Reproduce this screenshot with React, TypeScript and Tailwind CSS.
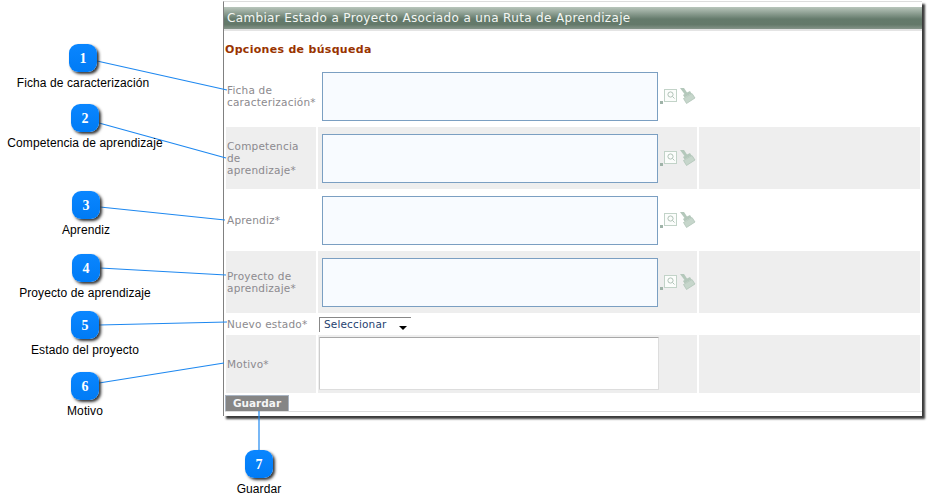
const verdana = "font-['DejaVu_Sans',sans-serif]";

function Icons() {
  return (
    <svg className="ml-[2px] shrink-0" width="36" height="18" viewBox="0 0 36 18">
      <rect x="4.5" y="2.5" width="12" height="12" fill="#fbfdfb" stroke="#c2d3c8" />
      <circle cx="10.5" cy="7.5" r="2.6" fill="none" stroke="#b0c2b7" />
      <path d="M12.5 9.5l2 2" stroke="#b0c2b7" />
      <rect x="0" y="14" width="3" height="3" fill="#9fb3a8" />
      <path d="M20 1h4l3 4.5 3-1.5 1.5 2.5-7 4-1.5-2.5 1.5-1z" fill="#b4c8bb" />
      <path d="M23.5 11.5l8.5-5 3 4.5-8.5 5.5z" fill="#c6d6cb" stroke="#b0c4b7" strokeWidth="0.8" />
    </svg>
  );
}

function Label({ children }: { children: React.ReactNode }) {
  return <span className="text-[10.5px] leading-[12px] tracking-[0.2px] text-[#8c8a8e]">{children}</span>;
}

function LookupRow({ label, gray }: { label: React.ReactNode; gray?: boolean }) {
  const bg = gray ? "bg-[#eeeeee]" : "bg-white";
  return (
    <div className="grid grid-cols-[90px_379px_221px] gap-x-[2px] h-[62px]">
      <div className={`${bg} flex items-center pl-[1px]`}>
        <Label>{label}</Label>
      </div>
      <div className={`${bg} flex items-center pl-[4px]`}>
        <div className="w-[336px] h-[49px] shrink-0 border border-[#7b9fc2] bg-[#f8fbff]" />
        <Icons />
      </div>
      <div className={bg} />
    </div>
  );
}

const badges = [
  { n: 1, x: 69, y: 44 },
  { n: 2, x: 71, y: 104 },
  { n: 3, x: 72, y: 191 },
  { n: 4, x: 72, y: 254 },
  { n: 5, x: 71, y: 311 },
  { n: 6, x: 71, y: 372 },
  { n: 7, x: 245, y: 450 },
];

const captions = [
  { t: "Ficha de caracterización", cx: 83, y: 76 },
  { t: "Competencia de aprendizaje", cx: 85, y: 136 },
  { t: "Aprendiz", cx: 86, y: 223 },
  { t: "Proyecto de aprendizaje", cx: 85, y: 286 },
  { t: "Estado del proyecto", cx: 85, y: 343 },
  { t: "Motivo", cx: 85, y: 404 },
  { t: "Guardar", cx: 259, y: 482 },
];

const lines = [
  [97, 61, 227, 90],
  [99, 123, 226, 158],
  [100, 207, 225, 220],
  [100, 268, 226, 275],
  [99, 325, 227, 322],
  [99, 383, 224, 363],
  [259, 411, 259, 450],
];

export default function App() {
  return (
    <div className="relative w-[935px] h-[499px] bg-white overflow-hidden">
      <div className="pl-[223px] pt-[1px]">
        <div className={`w-[699px] h-[415px] bg-white border-l border-t border-l-[#808080] border-t-[#dddddd] shadow-[3px_3px_2px_#3a3a3a] ${verdana}`}>
          <div className="h-[5px]" />
          <div className="h-[24px] bg-[linear-gradient(#b9c6bc,#647a6b_55%,#64796a_80%,#86958a)] border-b-[2px] border-[#e4e4e4] flex items-center pl-[3px] text-[12px] tracking-[0.35px] text-[#f4f7f4]">
            Cambiar Estado a Proyecto Asociado a una Ruta de Aprendizaje
          </div>
          <div className="h-[34px] pl-[1px] pt-[12px] text-[11px] leading-[14px] font-bold tracking-[0.3px] text-[#993300]">
            Opciones de búsqueda
          </div>
          <div className="pl-[2px] flex flex-col">
            <LookupRow label={<>Ficha de<br />caracterización*</>} />
            <LookupRow gray label={<>Competencia<br />de<br />aprendizaje*</>} />
            <LookupRow label="Aprendiz*" />
            <LookupRow gray label={<>Proyecto de<br />aprendizaje*</>} />
            <div className="grid grid-cols-[90px_602px] gap-x-[2px] h-[22px]">
              <div className="flex items-center pl-[1px]"><Label>Nuevo estado*</Label></div>
              <div className="flex items-center pl-[1px]">
                <div className="relative w-[92px] h-[15px] border-t border-l border-[#888888] bg-white pl-[4px] text-[10.5px] leading-[13px] tracking-[0.15px] text-[#1f3f6f]">
                  Seleccionar
                  <div className="absolute right-[4px] top-[8px] w-0 h-0 border-l-[4px] border-r-[4px] border-t-[4px] border-l-transparent border-r-transparent border-t-black" />
                </div>
              </div>
            </div>
            <div className="grid grid-cols-[90px_379px_221px] gap-x-[2px] h-[58px]">
              <div className="bg-[#eeeeee] flex items-center pl-[1px]"><Label>Motivo*</Label></div>
              <div className="bg-[#eeeeee] pl-[1px] pt-[2px]">
                <div className="w-[340px] h-[53px] bg-white border border-[#dddddd] border-t-[#a8a8a8] border-l-[#cccccc] rounded-[1px]" />
              </div>
              <div className="bg-[#eeeeee]" />
            </div>
            <div className="mt-[2px] -ml-[1px] h-[17px] border-b border-[#dddddd]">
              <div className="w-[64px] h-[16px] bg-[#858585] border-t border-l border-r border-[#a9b4c2] flex items-center justify-center text-[10.5px] font-bold text-[#f5f5f5]">
                Guardar
              </div>
            </div>
          </div>
        </div>
      </div>

      <svg className="absolute inset-0 pointer-events-none" width="935" height="499">
        {lines.map((l, i) => (
          <line key={i} x1={l[0]} y1={l[1]} x2={l[2]} y2={l[3]} stroke="#1e88f0" strokeWidth="1.2" />
        ))}
      </svg>

      {badges.map((b) => (
        <div
          key={b.n}
          className="absolute w-[28px] h-[28px] rounded-[9px] bg-[linear-gradient(#0a86ff,#007bf5)] shadow-[2px_2px_3px_#333333] flex items-center justify-center text-white text-[14px] font-bold font-['Liberation_Serif',serif]"
          style={{ left: b.x, top: b.y }}
        >
          {b.n}
        </div>
      ))}

      {captions.map((c) => (
        <div
          key={c.t}
          className="absolute w-[200px] text-center text-[12px] leading-[14px] tracking-[0.1px] text-black font-['Liberation_Sans',sans-serif]"
          style={{ left: c.cx - 100, top: c.y }}
        >
          {c.t}
        </div>
      ))}
    </div>
  );
}
